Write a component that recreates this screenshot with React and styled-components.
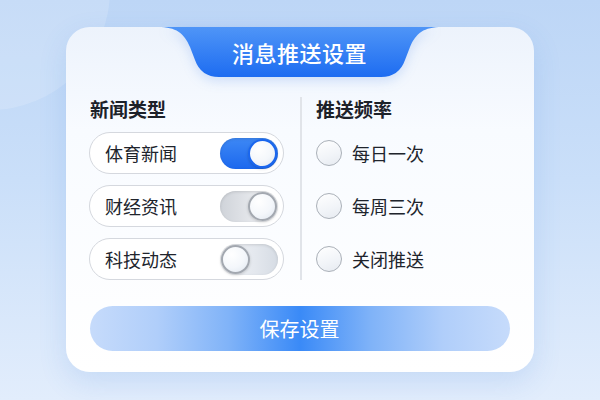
import React from "react";
import styled, { createGlobalStyle } from "styled-components";

const GlobalStyle = createGlobalStyle`
  html, body {
    margin: 0;
    padding: 0;
  }
  body {
    font-family: "Noto Sans CJK SC", "Noto Sans", sans-serif;
  }
`;

const Page = styled.div`
  position: relative;
  width: 600px;
  height: 400px;
  overflow: hidden;
  background: linear-gradient(180deg, #bdd6f6 0%, #cadff9 45%, #e2edfc 100%);
  padding-top: 27px;
  box-sizing: border-box;

  &::before {
    content: "";
    position: absolute;
    left: -130px;
    top: -130px;
    width: 240px;
    height: 240px;
    border-radius: 50%;
    background: rgba(255, 255, 255, 0.16);
  }
`;

const Card = styled.div`
  position: relative;
  width: 468px;
  height: 345px;
  margin: 0 auto;
  box-sizing: border-box;
  border-radius: 24px;
  background: linear-gradient(180deg, #edf3fc 0%, #f8fbff 30%, #ffffff 100%);
  box-shadow: 0 10px 28px rgba(70, 130, 220, 0.16);
  display: flex;
  flex-direction: column;
  padding: 0 24px 21px 23px;
`;

const Tab = styled.div`
  position: relative;
  align-self: center;
  width: 300px;
  height: 50px;
  display: flex;
  align-items: center;
  justify-content: center;
`;

const TabShape = styled.svg`
  position: absolute;
  inset: 0;
  width: 100%;
  height: 100%;
  filter: drop-shadow(0 4px 6px rgba(40, 110, 230, 0.18));
`;

const Title = styled.h1`
  position: relative;
  margin: 0;
  font-size: 22px;
  font-weight: 500;
  color: #ffffff;
  letter-spacing: 0.5px;
  line-height: 1;
`;

const Body = styled.div`
  display: grid;
  grid-template-columns: 211px 1fr;
  margin-top: 20px;
`;

const Column = styled.div`
  display: flex;
  flex-direction: column;
  gap: 11px;
  padding-right: ${(p) => (p.$divided ? "0" : "16px")};
  padding-left: ${(p) => (p.$divided ? "14px" : "0")};
  border-left: ${(p) => (p.$divided ? "2px solid #e1e4e9" : "none")};
`;

const Heading = styled.h2`
  margin: 0 0 0 ${(p) => (p.$inset ? "1px" : "0")};
  font-size: 19px;
  line-height: 24px;
  height: 24px;
  font-weight: 700;
  color: #1d2129;
`;

const ToggleRow = styled.div`
  height: 42px;
  box-sizing: border-box;
  border: 1.5px solid #d5d8de;
  border-radius: 21px;
  background: #ffffff;
  display: flex;
  align-items: center;
  justify-content: space-between;
  padding: 0 5px 0 15px;
`;

const Label = styled.span`
  font-size: 18px;
  color: #20242c;
  line-height: 1;
`;

const Track = styled.div`
  width: 58px;
  height: 31px;
  border-radius: 16px;
  box-sizing: border-box;
  display: flex;
  align-items: center;
  justify-content: ${(p) => (p.$right ? "flex-end" : "flex-start")};
  padding: 0 1px;
  background: ${(p) =>
    p.$on
      ? "linear-gradient(180deg, #3d88f5 0%, #1c68ee 100%)"
      : p.$right
      ? "linear-gradient(90deg, #cfd3d9 0%, #e7e9ed 60%, #f1f3f6 100%)"
      : "linear-gradient(90deg, #f2f4f7 0%, #e4e8ee 60%, #d6dce4 100%)"};
  box-shadow: inset 0 1px 3px rgba(0, 0, 0, 0.12);
`;

const Knob = styled.div`
  width: 29px;
  height: 29px;
  border-radius: 50%;
  box-sizing: border-box;
  border: 2.5px solid ${(p) => (p.$on ? "#1a66ee" : "#a3a8b0")};
  background: radial-gradient(circle at 35% 30%, #ffffff 0%, #f4f7fb 55%, #dfe6ef 100%);
  box-shadow: 0 1px 3px rgba(0, 0, 0, 0.18);
`;

const RadioRow = styled.div`
  height: 42px;
  display: flex;
  align-items: center;
  gap: 10px;
`;

const RadioDot = styled.div`
  width: 26px;
  height: 26px;
  border-radius: 50%;
  box-sizing: border-box;
  border: 1.5px solid #aab0b8;
  background: linear-gradient(160deg, #ffffff 0%, #f1f4f8 60%, #e6eaf0 100%);
`;

const SaveButton = styled.button`
  margin-top: 26px;
  height: 45px;
  width: 420px;
  align-self: center;
  border: none;
  border-radius: 23px;
  font-family: inherit;
  font-size: 20px;
  color: #ffffff;
  background: linear-gradient(
    90deg,
    #c6dbfb 0%,
    #b0cefa 16%,
    #80b3f8 33%,
    #3a8af7 50%,
    #80b3f8 67%,
    #b0cefa 84%,
    #c6dbfb 100%
  );
  cursor: pointer;
`;

const newsTypes = [
  { label: "体育新闻", on: true, right: true },
  { label: "财经资讯", on: false, right: true },
  { label: "科技动态", on: false, right: false },
];

const frequencies = ["每日一次", "每周三次", "关闭推送"];

export default function App() {
  return (
    <>
      <GlobalStyle />
      <Page>
        <Card>
          <Tab>
            <TabShape viewBox="0 0 300 50" preserveAspectRatio="none">
              <defs>
                <linearGradient id="tabFill" x1="0" y1="0" x2="0" y2="1">
                  <stop offset="0%" stopColor="#4f95f7" />
                  <stop offset="100%" stopColor="#1d6cf1" />
                </linearGradient>
              </defs>
              <path
                d="M8,0 H292 C274,0 266,6 260,20 L255,33 Q249,50 231,50 H69 Q51,50 45,33 L40,20 C34,6 26,0 8,0 Z"
                fill="url(#tabFill)"
              />
            </TabShape>
            <Title>消息推送设置</Title>
          </Tab>
          <Body>
            <Column>
              <Heading $inset>新闻类型</Heading>
              {newsTypes.map((t) => (
                <ToggleRow key={t.label}>
                  <Label>{t.label}</Label>
                  <Track $on={t.on} $right={t.right}>
                    <Knob $on={t.on} />
                  </Track>
                </ToggleRow>
              ))}
            </Column>
            <Column $divided>
              <Heading>推送频率</Heading>
              {frequencies.map((f) => (
                <RadioRow key={f}>
                  <RadioDot />
                  <Label>{f}</Label>
                </RadioRow>
              ))}
            </Column>
          </Body>
          <SaveButton>保存设置</SaveButton>
        </Card>
      </Page>
    </>
  );
}
